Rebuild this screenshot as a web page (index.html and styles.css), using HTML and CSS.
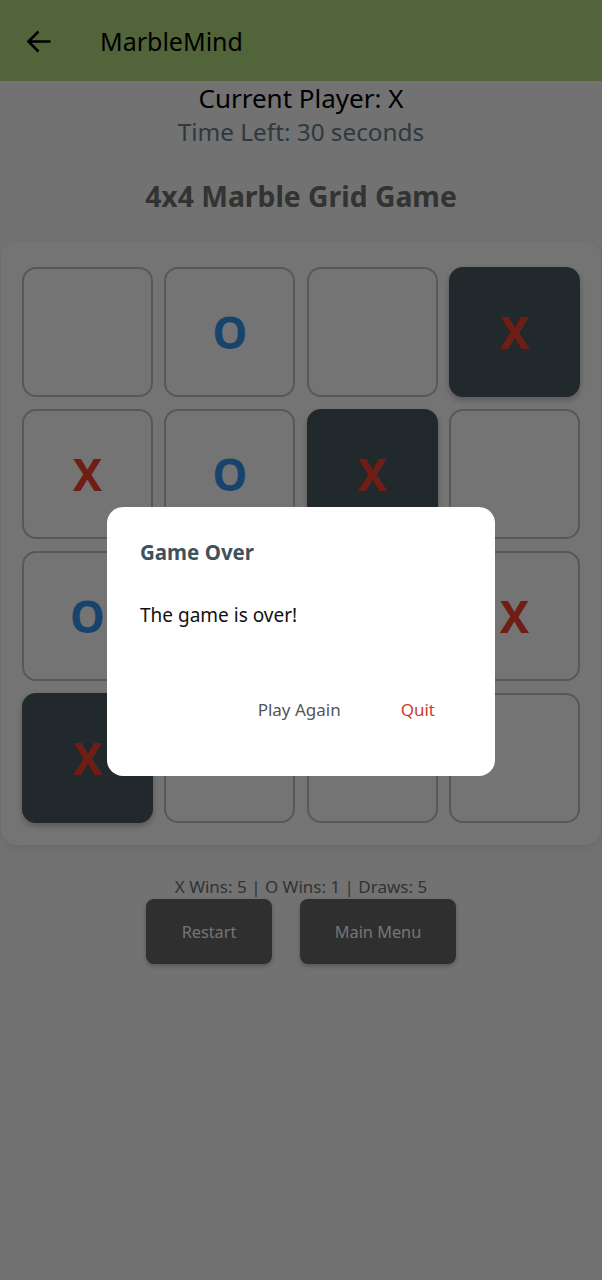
FILE: index.html
```html
<!DOCTYPE html>
<html>
<head>
<meta charset="utf-8">
<link rel="stylesheet" href="styles.css">
</head>
<body>
<div class="app">
  <header class="appbar">
    <svg class="back" viewBox="0 0 26 26" width="26" height="26"><path d="M3 12.5H24.5M12.5 2.5L2.5 12.5L12.5 22.5" fill="none" stroke="#000" stroke-width="2.6"/></svg>
    <div class="apptitle">MarbleMind</div>
  </header>
  <main class="content">
    <div class="player">Current Player: X</div>
    <div class="timer">Time Left: 30 seconds</div>
    <h1 class="title">4x4 Marble Grid Game</h1>
    <section class="card">
      <div class="grid">
        <div class="cell"></div>
        <div class="cell o">O</div>
        <div class="cell"></div>
        <div class="cell dark x">X</div>
        <div class="cell x">X</div>
        <div class="cell o">O</div>
        <div class="cell dark x">X</div>
        <div class="cell"></div>
        <div class="cell o">O</div>
        <div class="cell"></div>
        <div class="cell"></div>
        <div class="cell x">X</div>
        <div class="cell dark x">X</div>
        <div class="cell"></div>
        <div class="cell"></div>
        <div class="cell"></div>
      </div>
    </section>
    <div class="stats">X Wins: 5 | O Wins: 1 | Draws: 5</div>
    <div class="actions">
      <button class="btn restart">Restart</button>
      <button class="btn menu">Main Menu</button>
    </div>
  </main>
  <div class="scrim">
    <div class="dialog">
      <div class="dtitle">Game Over</div>
      <div class="dbody">The game is over!</div>
      <div class="dactions">
        <span class="dbtn again">Play Again</span>
        <span class="dbtn quit">Quit</span>
      </div>
    </div>
  </div>
</div>
</body>
</html>
```

FILE: styles.css
```css
* { box-sizing: border-box; }
html, body { margin: 0; padding: 0; }
body {
  width: 602px;
  height: 1280px;
  background: #e4e4e4;
  font-family: "Noto Sans", Roboto, sans-serif;
  overflow: hidden;
}
.app { position: relative; width: 602px; height: 1280px; }
.appbar {
  height: 81px;
  background: #a4c874;
  display: flex;
  align-items: center;
  padding-left: 26px;
}
.back { margin-right: 48px; margin-top: 2px; }
.apptitle { font-size: 25px; color: #000; }
.content { display: flex; flex-direction: column; align-items: center; }
.player { font-size: 26px; color: #000; margin-top: 1px; line-height: 32px; }
.timer { font-size: 24.3px; color: #5c7280; line-height: 32px; margin-top: 2px; }
.title {
  font-size: 28.3px; font-weight: 700; color: #666;
  margin: 28px 0 0; line-height: 40px;
}
.card {
  margin-top: 26px;
  width: 600px;
  background: #e9e9e9;
  border-radius: 16px;
  box-shadow: 0 3px 10px rgba(0,0,0,0.08);
  padding: 25px 21px 22px 21px;
}
.grid {
  display: grid;
  grid-template-columns: repeat(4, 1fr);
  grid-auto-rows: 130px;
  column-gap: 11.5px;
  row-gap: 12px;
}
.cell {
  border: 2px solid #b0b0b0;
  border-radius: 14px;
  display: flex; align-items: center; justify-content: center;
  font-family: "Noto Sans", Roboto, sans-serif;
  font-weight: 700;
  font-size: 44px;
}
.cell.dark {
  background: #44525a;
  border-color: #44525a;
  box-shadow: 0 3px 6px rgba(0,0,0,0.25);
}
.x { color: #e03a2c; }
.o { color: #2f86d8; }
.stats { margin-top: 31px; font-size: 17px; color: #666; line-height: 22px; }
.actions { display: flex; gap: 28px; margin-top: 1px; }
.btn {
  height: 65px;
  border: 0;
  border-radius: 8px;
  background: #5e5e5e;
  color: #e8e8e8;
  font-family: "Noto Sans", Roboto, sans-serif;
  font-size: 16.3px;
  box-shadow: 0 2px 4px rgba(0,0,0,0.25);
}
.restart { width: 126px; }
.menu { width: 156px; }
.scrim {
  position: absolute; inset: 0;
  background: rgba(0,0,0,0.5);
}
.dialog {
  position: absolute;
  left: 107px; top: 507px;
  width: 388px; height: 269px;
  background: #fff;
  border-radius: 16px;
  padding: 31px 33px 0;
}
.dtitle { font-size: 20.5px; font-weight: 700; color: #3f525c; line-height: 28px; }
.dbody { font-size: 19px; color: #111; margin-top: 36px; line-height: 26px; }
.dactions { display: flex; justify-content: flex-end; gap: 60px; margin-top: 71px; padding-right: 27px; }
.dbtn { font-size: 17px; line-height: 22px; }
.again { color: #555; }
.quit { color: #d0392e; }
```
